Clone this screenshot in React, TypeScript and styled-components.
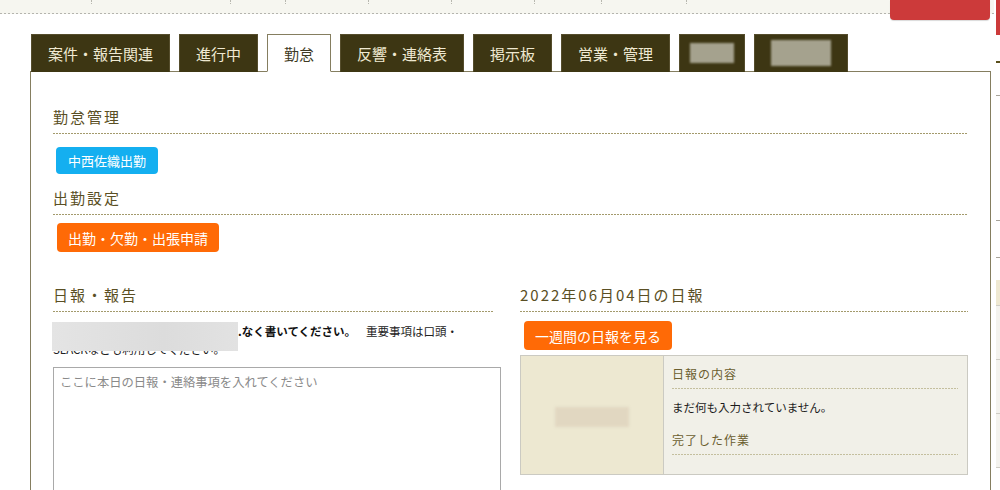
import React from "react";
import styled, { createGlobalStyle } from "styled-components";

const GlobalStyle = createGlobalStyle`
  html, body {
    margin: 0;
    padding: 0;
    background: #ffffff;
  }
  body {
    font-family: "Noto Sans CJK JP", "Noto Sans", sans-serif;
    color: #222;
    overflow: hidden;
  }
`;

const dotted = (color: string) => `
  background-image: repeating-linear-gradient(to right, ${color} 0 2px, transparent 2px 3px);
  background-size: 100% 1px;
  background-repeat: no-repeat;
  background-position: left bottom;
`;

const Page = styled.div`
  display: flex;
  width: 1000px;
  height: 490px;
  overflow: hidden;
`;

const Main = styled.div`
  flex: 0 0 994px;
  display: flex;
  flex-direction: column;
`;

// top header (scrolled mostly off the page)
const TopBar = styled.div`
  height: 14px;
  display: flex;
  align-items: flex-start;
  background-color: #f6f6f0;
  background-image: repeating-linear-gradient(to right, #b4b4ae 0 2px, transparent 2px 4px);
  background-size: 100% 1px;
  background-repeat: no-repeat;
  background-position: left 13px;
`;

const TopCell = styled.div<{ $w: number }>`
  width: ${(p) => p.$w}px;
  height: 4px;
  border-right: 1px dotted #b8b8b0;
  flex: 0 0 auto;
`;

const LogoutButton = styled.div`
  margin-left: auto;
  margin-right: 4px;
  width: 100px;
  height: 20px;
  background: #cc3a3a;
  border-radius: 0 0 4px 4px;
  box-shadow: 0 1px 1px rgba(0, 0, 0, 0.15);
  position: relative;
  z-index: 1;
`;

const TabBar = styled.div`
  display: flex;
  gap: 9px;
  margin: 20px 0 0 31px;
  position: relative;
  z-index: 1;
`;

const Tab = styled.div<{ $active?: boolean; $compact?: boolean }>`
  height: 38px;
  box-sizing: border-box;
  display: flex;
  align-items: center;
  padding: 0 ${(p) => (p.$compact ? 10 : 16)}px;
  font-size: 15px;
  color: ${(p) => (p.$active ? "#3e3a24" : "#efe9d2")};
  background: ${(p) => (p.$active ? "#ffffff" : "#3d3613")};
  border: 1px solid ${(p) => (p.$active ? "#857e60" : "#554d2c")};
  border-bottom: ${(p) => (p.$active ? "1px solid #ffffff" : "1px solid #3d3613")};
  margin-bottom: -1px;
  white-space: nowrap;
`;

const TabRedact = styled.span<{ $w: number; $h: number }>`
  display: block;
  width: ${(p) => p.$w}px;
  height: ${(p) => p.$h}px;
  background: #a5a28e;
  filter: blur(0.8px);
`;

const Panel = styled.div`
  flex: 1;
  margin-left: 30px;
  width: 961px;
  box-sizing: border-box;
  border: 1px solid #857e60;
  border-bottom: none;
  padding: 34px 22px 0;
`;

const Heading = styled.h2<{ $trim?: number }>`
  margin: 0 ${(p) => p.$trim ?? 0}px 0 0;
  font-size: 15px;
  font-weight: normal;
  line-height: 22px;
  letter-spacing: 2px;
  color: #5a4f24;
  padding-bottom: 6px;
  ${dotted("#a39a6c")}
`;

const ActionButton = styled.div<{ $tone: "blue" | "orange"; $top: number }>`
  display: inline-flex;
  align-items: center;
  margin: ${(p) => p.$top}px 0 0 ${(p) => (p.$tone === "blue" ? 3 : 4)}px;
  height: ${(p) => (p.$tone === "blue" ? 27 : 29)}px;
  padding: 0 ${(p) => (p.$tone === "blue" ? 12 : 11)}px;
  border-radius: 4px;
  font-size: ${(p) => (p.$tone === "blue" ? 13 : 14)}px;
  color: #ffffff;
  background: ${(p) => (p.$tone === "blue" ? "#14aff0" : "#ff6a06")};
  white-space: nowrap;
`;

const Section = styled.div<{ $top: number }>`
  margin-top: ${(p) => p.$top}px;
  display: flex;
  flex-direction: column;
  align-items: flex-start;
  & > ${Heading} {
    align-self: stretch;
  }
`;

const Columns = styled.div`
  display: grid;
  grid-template-columns: 448px 448px;
  column-gap: 19px;
  margin-top: 32px;
`;

const Column = styled.div`
  display: flex;
  flex-direction: column;
  align-items: flex-start;
  & > ${Heading} {
    align-self: stretch;
  }
`;

const Notice = styled.p`
  position: relative;
  margin: 10px 0 0;
  font-size: 11.5px;
  line-height: 18px;
  color: #222;
`;

const HiddenLead = styled.span`
  display: inline-block;
  width: 185px;
`;

const Strong = styled.b`
  color: #111;
  font-weight: bold;
  margin-right: 10px;
`;

const NoticeRedact = styled.span`
  position: absolute;
  left: -1px;
  top: 0;
  width: 186px;
  height: 29px;
  background: linear-gradient(to right, #e4e4e4, #dcdcdc 60%, #e2e2e2);
  filter: blur(0.6px);
`;

const ReportInput = styled.textarea`
  margin-top: 9px;
  width: 448px;
  height: 150px;
  box-sizing: border-box;
  border: 1px solid #a9a9a9;
  padding: 6px 6px;
  font-family: "Noto Sans CJK JP", "Noto Sans", sans-serif;
  font-size: 12.3px;
  line-height: 17px;
  resize: none;
  outline: none;
  &::placeholder {
    color: #8a8a8a;
  }
`;

const ReportBox = styled.div`
  margin-top: 5px;
  align-self: stretch;
  display: grid;
  grid-template-columns: 143px 1fr;
  border: 1px solid #cbcac2;
  height: 120px;
  box-sizing: border-box;
`;

const PhotoCell = styled.div`
  background: #ede8d1;
  border-right: 1px solid #cbcac2;
  display: flex;
  align-items: center;
  justify-content: center;
  padding-top: 3px;
`;

const PhotoRedact = styled.span`
  width: 74px;
  height: 20px;
  background: #e1d7c1;
  filter: blur(1.5px);
`;

const ReportBody = styled.div`
  background: #f1f0e8;
  padding: 9px 9px 0 8px;
`;

const ReportLabel = styled.div<{ $top: number }>`
  margin-top: ${(p) => p.$top}px;
  font-size: 12px;
  line-height: 18px;
  letter-spacing: 1px;
  color: #6b5e2f;
  padding-bottom: 6px;
  ${dotted("#c4bf9e")}
`;

const ReportText = styled.div`
  margin-top: 9px;
  font-size: 11.5px;
  line-height: 18px;
  color: #1a1a1a;
`;

// partially visible side column at the right edge
const Side = styled.div`
  flex: 1;
  margin-left: 2px;
  display: flex;
  flex-direction: column;
`;

const SideTop = styled.div`
  height: 35px;
  background: #cc3a3a;
`;

const SideMark = styled.div<{ $top: number; $dark?: boolean }>`
  margin-top: ${(p) => p.$top}px;
  height: ${(p) => (p.$dark ? 2 : 1)}px;
  background: ${(p) => (p.$dark ? "#5a4f1c" : "#a8a49a")};
`;

const SideHead = styled.div`
  margin-top: 22px;
  height: 25px;
  background: #efe9d2;
  border-bottom: 1px solid #d0cec6;
`;

const SideRow = styled.div`
  height: 53px;
  background: #f4f3ee;
  border-bottom: 1px solid #cfcdc5;
`;

const topCells = [91, 138, 54, 82, 82, 82, 66, 84];

const tabs = ["案件・報告関連", "進行中", "勤怠", "反響・連絡表", "掲示板", "営業・管理"];

export default function App() {
  return (
    <>
      <GlobalStyle />
      <Page>
        <Main>
          <TopBar>
            {topCells.map((w, i) => (
              <TopCell key={i} $w={w} />
            ))}
            <LogoutButton />
          </TopBar>

          <TabBar>
            {tabs.map((t) => (
              <Tab key={t} $active={t === "勤怠"}>
                {t}
              </Tab>
            ))}
            <Tab $compact>
              <TabRedact $w={44} $h={20} />
            </Tab>
            <Tab>
              <TabRedact $w={60} $h={26} />
            </Tab>
          </TabBar>

          <Panel>
            <Section $top={0}>
              <Heading>勤怠管理</Heading>
              <ActionButton $tone="blue" $top={13}>中西佐織出勤</ActionButton>
            </Section>
            <Section $top={13}>
              <Heading>出勤設定</Heading>
              <ActionButton $tone="orange" $top={8}>出勤・欠勤・出張申請</ActionButton>
            </Section>

            <Columns>
              <Column>
                <Heading $trim={8}>日報・報告</Heading>
                <Notice>
                  <HiddenLead />
                  <Strong>.なく書いてください。</Strong>
                  重要事項は口頭・
                  <br />
                  SLACKなども利用してください。
                  <NoticeRedact />
                </Notice>
                <ReportInput placeholder="ここに本日の日報・連絡事項を入れてください" />
              </Column>

              <Column>
                <Heading>2022年06月04日の日報</Heading>
                <ActionButton $tone="orange" $top={9}>一週間の日報を見る</ActionButton>
                <ReportBox>
                  <PhotoCell>
                    <PhotoRedact />
                  </PhotoCell>
                  <ReportBody>
                    <ReportLabel $top={0}>日報の内容</ReportLabel>
                    <ReportText>まだ何も入力されていません。</ReportText>
                    <ReportLabel $top={15}>完了した作業</ReportLabel>
                  </ReportBody>
                </ReportBox>
              </Column>
            </Columns>
          </Panel>
        </Main>

        <Side>
          <SideTop />
          <SideMark $top={26} $dark />
          <SideMark $top={32} />
          <SideMark $top={124} />
          <SideMark $top={36} />
          <SideHead />
          <SideRow />
          <SideRow />
          <SideRow />
        </Side>
      </Page>
    </>
  );
}
